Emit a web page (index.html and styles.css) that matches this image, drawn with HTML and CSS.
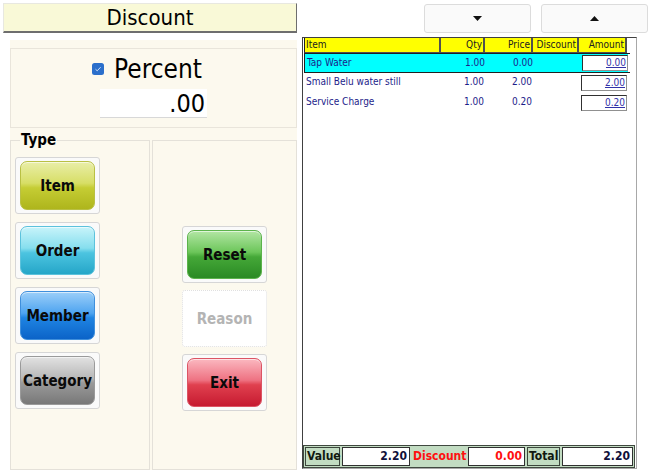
FILE: index.html
```html
<!DOCTYPE html>
<html>
<head>
<meta charset="utf-8">
<link rel="stylesheet" href="styles.css">
</head>
<body>
<div class="app">
  <div class="left">
    <div class="title">Discount</div>
    <div class="panel">
      <div class="percent-box">
        <div class="pct-row">
          <span class="chk"><svg width="12" height="12" viewBox="0 0 12 12"><rect x="0" y="0" width="12" height="12" rx="2.5" fill="#2b6fcb"/><path d="M3.5 6.2 L5.2 7.8 L8.6 4.2" stroke="#cfe0f7" stroke-width="1" fill="none"/></svg></span>
          <span class="pct-label">Percent</span>
        </div>
        <div class="pct-input">.00</div>
      </div>
      <div class="lower">
        <fieldset class="type">
          <legend>Type</legend>
          <div class="frame"><div class="btn item">Item</div></div>
          <div class="frame"><div class="btn order">Order</div></div>
          <div class="frame"><div class="btn member">Member</div></div>
          <div class="frame"><div class="btn category">Category</div></div>
        </fieldset>
        <div class="actions">
          <div class="frame"><div class="btn reset">Reset</div></div>
          <div class="frame disabled"><div class="btn reason">Reason</div></div>
          <div class="frame"><div class="btn exit">Exit</div></div>
        </div>
      </div>
    </div>
  </div>
  <div class="right">
    <div class="nav">
      <div class="navbtn"><svg width="9" height="5" viewBox="0 0 9 5"><polygon points="0,0 9,0 4.5,5" fill="#111"/></svg></div>
      <div class="navbtn"><svg width="9" height="5" viewBox="0 0 9 5"><polygon points="0,5 9,5 4.5,0" fill="#111"/></svg></div>
    </div>
    <div class="grid-wrap">
      <div class="grid">
        <div class="row head">
          <div class="c h-item">Item</div>
          <div class="c num">Qty</div>
          <div class="c num">Price</div>
          <div class="c num">Discount</div>
          <div class="c num">Amount</div>
          <div class="c blank"></div>
        </div>
        <div class="row data selected">
          <div class="c">Tap Water</div>
          <div class="c num">1.00</div>
          <div class="c num">0.00</div>
          <div class="c num"></div>
          <div class="c amt"><span class="amtbox">0.00</span></div>
          <div class="c blank"></div>
        </div>
        <div class="row data">
          <div class="c">Small Belu water still</div>
          <div class="c num">1.00</div>
          <div class="c num">2.00</div>
          <div class="c num"></div>
          <div class="c amt"><span class="amtbox">2.00</span></div>
          <div class="c blank"></div>
        </div>
        <div class="row data">
          <div class="c">Service Charge</div>
          <div class="c num">1.00</div>
          <div class="c num">0.20</div>
          <div class="c num"></div>
          <div class="c amt"><span class="amtbox">0.20</span></div>
          <div class="c blank"></div>
        </div>
      </div>
      <div class="totals">
        <div class="t-label w-value">Value</div>
        <div class="t-box w-vbox">2.20</div>
        <div class="t-label red nob w-disc">Discount</div>
        <div class="t-box red w-dbox">0.00</div>
        <div class="t-label w-total">Total</div>
        <div class="t-box w-tbox">2.20</div>
      </div>
    </div>
  </div>
</div>
</body>
</html>
```

FILE: styles.css
```css
* { box-sizing: border-box; }
html, body { margin: 0; padding: 0; }
body {
  width: 650px;
  height: 470px;
  overflow: hidden;
  background: #ffffff;
  font-family: "DejaVu Sans Condensed", "Liberation Sans", sans-serif;
  color: #000;
}
.app { display: flex; width: 650px; height: 470px; }

/* LEFT */
.left { width: 300px; padding: 3px 0 0 3px; display: flex; flex-direction: column; }
.title {
  width: 294px; height: 30px;
  background: #f9f9d7;
  border: 1px solid;
  border-color: #e8e8e0 #6e6e6e #6e6e6e #e8e8e0;
  border-bottom-width: 2px;
  font-size: 22px; line-height: 27px; text-align: center;
}
.panel {
  margin: 7px 0 0 7px;
  width: 287px; height: 430px;
  background: #fcf9ee;
  display: flex; flex-direction: column;
}
.percent-box {
  margin-top: 8px; height: 80px;
  border: 1px solid #e9e5db;
  display: flex; flex-direction: column; align-items: center;
  padding-top: 5px;
}
.pct-row { display: flex; align-items: center; gap: 10px; margin-left: -13px; height: 30px; }
.chk { width: 12px; height: 12px; display: flex; }
.pct-label { font-size: 26px; line-height: 30px; }
.pct-input {
  margin-top: 5px;
  width: 107px; height: 29px;
  background: #fff;
  border-bottom: 1px solid #d8d8d8;
  font-size: 25px; line-height: 29px; text-align: right; padding-right: 2px;
}
.lower { display: flex; margin-top: 5px; flex: 1; }
.type {
  margin: 0; padding: 9px 0 0 4px;
  width: 140px; height: 337px;
  border: 1px solid #e4e1d9;
  display: flex; flex-direction: column; gap: 8px;
  min-width: 0;
}
.type legend {
  margin-left: 5px; padding: 0 1px;
  font-weight: bold; font-size: 15px; line-height: 15px;
}
.actions {
  margin: 7px 0 0 2px;
  width: 145px; height: 330px;
  border: 1px solid #e4e1d9;
  display: flex; flex-direction: column; align-items: center; gap: 7px;
  padding-top: 85px;
}

.frame {
  width: 85px; height: 57px;
  border: 1px solid #d6d6d6; border-radius: 3px;
  background: #fafafa;
  padding: 3px 4px;
}
.frame.disabled { border: 1px dotted #e0e0e0; background: #fff; }
.btn {
  width: 75px; height: 49px;
  border-radius: 7px;
  display: flex; align-items: center; justify-content: center;
  font-family: "DejaVu Sans Condensed", "Liberation Sans", sans-serif;
  font-weight: bold; font-size: 15px; color: #0a0a0a;
  box-shadow: inset 0 1px 0 rgba(255,255,255,0.6);
}
.btn.item {
  background: linear-gradient(to bottom, #e9eea8 0%, #d7de66 45%, #c5cd34 55%, #aeb51c 100%);
  border: 1px solid #b9c044;
}
.btn.order {
  background: linear-gradient(to bottom, #c8f4fa 0%, #86deee 45%, #4cc4e0 55%, #25a6c8 100%);
  border: 1px solid #5cc2dc;
}
.btn.member {
  background: linear-gradient(to bottom, #9ccff9 0%, #4ea4f0 45%, #1f84e2 55%, #0b63c8 100%);
  border: 1px solid #3f8fdc;
}
.btn.category {
  background: linear-gradient(to bottom, #e2e2e2 0%, #b8b8b8 45%, #9a9a9a 55%, #787878 100%);
  border: 1px solid #9a9a9a;
}
.btn.reset {
  background: linear-gradient(to bottom, #b2e6a4 0%, #6cc65a 45%, #45a838 55%, #2a8a24 100%);
  border: 1px solid #5cb34c;
}
.btn.exit {
  background: linear-gradient(to bottom, #fbb8c0 0%, #ee7282 45%, #e0404f 55%, #c61a30 100%);
  border: 1px solid #dc5464;
}
.btn.reason { background: #fff; color: #b4b4b4; box-shadow: none; }

/* RIGHT */
.right { width: 350px; display: flex; flex-direction: column; }
.nav { display: flex; justify-content: flex-end; gap: 10px; padding: 4px 2px 0 0; height: 33px; }
.navbtn {
  width: 107px; height: 29px;
  border: 1px solid #dcdcdc; border-radius: 3px;
  background: #fafafa;
  display: flex; align-items: center; justify-content: center;
}
.grid-wrap {
  margin: 4px 0 0 2px;
  width: 335px; height: 432px;
  border: 1px solid;
  border-color: #404040 #a8a8a8 #a8a8a8 #404040;
  background: #fff;
  display: flex; flex-direction: column; justify-content: space-between;
}
.grid { padding-left: 1px; font-size: 10px; }
.row { display: grid; grid-template-columns: 137px 44px 48px 46px 48px 3px; }
.row.head { height: 15px; line-height: 13px; }
.row.head .c {
  background: #ffff00;
  border-right: 2px solid #505050;
  border-bottom: 1px solid #505050;
  color: #202020;
}
.row.head .h-item { border-left: 1px solid #202020; padding-left: 1px; }
.row.head .c.num { padding-right: 1px; }
.row.head .c.blank { background: transparent; border: none; }
.row.data { height: 20px; line-height: 18px; color: #1d1d8a; }
.row.data .c { padding-left: 2px; }
.row.data .c.num { text-align: right; padding-right: 1px; padding-left: 0; }
.row.data.selected { background: #00ffff; border: 1px solid #202020; width: 326px; }
.row.data.selected .c.blank { background: #fff; }
.num { text-align: right; }
.c.amt { display: flex; align-items: center; padding-left: 1px; }
.amtbox {
  display: block; width: 47px; height: 16px;
  background: #fff;
  border: 1px solid #303030;
  border-right-color: #909090; border-bottom-color: #909090;
  text-align: right; padding-right: 1px;
  line-height: 14px;
  text-decoration: underline;
  color: #3232a8;
}

.totals {
  display: flex; gap: 2px;
  width: 332px; height: 23px;
  padding: 1px;
  background: #c2dcc2;
  border: 1px solid #404840;
  font-weight: bold; font-size: 12px; line-height: 17px;
}
.t-label { border: 1px solid #3c463c; color: #101810; padding-left: 1px; }
.t-label.nob { border-color: transparent; padding-left: 0; }
.t-box {
  background: #fff;
  border: 1px solid #303030;
  text-align: right; padding-right: 2px;
  color: #10103a;
}
.red { color: #ff1010; }
.w-value { width: 35px; }
.w-vbox { width: 68px; }
.w-disc { width: 54px; }
.w-dbox { width: 57px; }
.w-total { width: 33px; }
.w-tbox { width: 71px; }
```
